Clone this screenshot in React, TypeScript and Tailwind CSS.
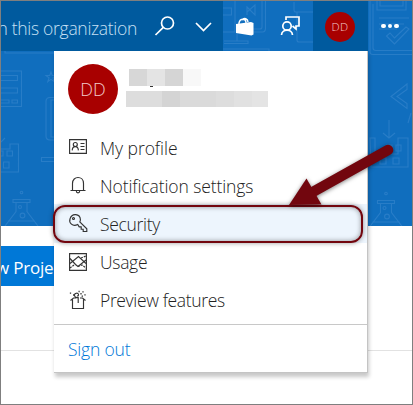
import React from 'react';

const font = "font-['Open_Sans','Noto_Sans',sans-serif]";

function Doodles() {
  return (
    <svg className="absolute inset-0" width="411" height="225" viewBox="1 1 411 225" fill="none" stroke="#3987ce" strokeWidth="1.1" opacity="0.6">
      <path d="M5 51v2h55v-2M1 71h20.500v35.500H1M1 75.500h16.500v5H1M1 88h16.500v5H1M1 100h8v3H1M12 100h5.500v3H12z" />
      <path d="M51 72l1.200 3.500h3.800l-3 2.400 1.200 3.700-3.200-2.200-3.200 2.200 1.200-3.700-3-2.400h3.800z" />
      <path d="M54 97.500h-4c-3 0-4 2-4 4V136c0 3 2 4 4 4h4M54 100h-3v37h3M1 142l4-4M1 149h9v-5h8.500v28H1M1 151h2v5H1M7 151h5.500v5H7zM3.500 162h5.500v6H3.500zM54 157.500H41.500v4H54" />
      <g id="flask"><circle cx="21.500" cy="192.500" r="1.300"/><path d="M13 199.500h17v3H13zM16 202.500v9L5 226M27 202.500v9L38 226M8 221h27" /><circle cx="20" cy="207" r="1.500"/><circle cx="22.500" cy="215.500" r="2.400"/></g>
      <use href="#flask" x="364.500" y="1" />
      <path d="M223 8h8.500v7H223M235 1v31h-12M265.500 1v27c0 2-1 4-3 4H238M262 1v26c0 1-1 2-2 2h-22M224 41h24v2.500h-24M237 32v9M223 49h46v2" />
      <path d="M247 7l8 8V5l-8 7v3zM247 7v8M294 2v8c0 1 1 2 2 2h17M297 12v28c0 1.500 1 2 2 2h14" />
      <path d="M370 1v51c0 2 1 2.500 3 2.500h39M373 4v44c0 2 1 2.500 3 2.500h36M377 1v9h29V1M380 1v5h23V1M379 18h30M379 24h25M379 29h18M386.500 36l8 8L409 29l-3-2-11.500 11-4.500-5z" />
      <path d="M407 84l-16 12.500 16 12v-5l-10-7 10-7zM389 120v11M411 113l-3 10M389 130v8M383 133l6 5 6-5M370 138h5v16h23v-16h10v29h-37zM387 145h5v6h-5zM396 145h5v6h-5zM380 158h6v6h-6zM393 158h6v6h-6z" />
    </svg>
  );
}

const icons: Record<string, React.ReactNode> = {
  'My profile': <><path d="M1.600 2.600h16.800v13.800H1.600z"/><circle cx="7.300" cy="7.500" r="2"/><path d="M4.200 13.400c.3-5 5.900-5 6.200 0M12.500 6.500h4M12.500 9.500h4M12.500 12.500h4"/></>,
  'Notification settings': <><path d="M2.500 15.500h2v-7c0-8 11-8 11 0v7h2h-15M8.300 16c0 2.500 3.400 2.500 3.400 0"/></>,
  Security: <><path d="M9.700 11.500C4.500 14 .7 9.800 2 5.900 4-.4 12 .7 12.400 6.500c0 1-.2 1.700-.6 2.500l7 6.800v2.700h-3.600v-2.300h-2v-2.300h-2z"/><circle cx="5.500" cy="5.500" r="1"/></>,
  Usage: <><path d="M1.600 1.600h16.800v16.800H1.600z"/><path d="M2 6.500l5.500 6 2.500 2 8-6.500M2 11.500L10.500 4.500 18 11.500"/><path d="M2 16l4-3M10 14.500l4-1.500 4 3M13 6l5-2" strokeDasharray="2 1"/></>,
  'Preview features': <><path d="M4.500 9.500v9h11v-9M2.500 10.500l3-2.500H8M12 8h2.500l3 2.500M10.200 13V7.500c-4 1-5-4-1.800-4.300 3-.2 2.500 3.300.6 2.700"/><path d="M2.500 2.500v1.300M5 5h1.200M13 3v1.400M15 1.200v1.400M17 4.200v1.400M13.600 6.200H15M10.500 1.500h1.200" strokeWidth="1.300"/></>,
};

function MenuItem({ label, tracking, active = false }: { label: string; tracking: string; active?: boolean }) {
  return (
    <li className={`flex h-[38.200px] items-center pl-3.5 ${active ? 'bg-[#edf5fd]' : ''}`}>
      <svg width="20" height="20" viewBox="0 0 20 20" fill="none" stroke="#333" strokeWidth="1.150" className="shrink-0">{icons[label]}</svg>
      <span className={`ml-3 mt-px whitespace-nowrap text-[17.500px] font-[350] leading-[24px] text-[#222] ${tracking}`}>{label}</span>
    </li>
  );
}

function ProfileMenu() {
  return (
    <div className="absolute left-[53px] top-[50px] flex h-[322px] w-[314px] flex-col border-r border-b border-[#c4c4c4] bg-white shadow-[1px_4px_4px_rgba(0,0,0,0.22)]">
      <div className="flex h-[77px] shrink-0 pl-3.5 pt-[13px]">
        <div className="flex size-[50px] shrink-0 items-center justify-center rounded-full bg-[#a80000] text-[18px] font-light leading-none text-[#f3caca]">DD</div>
        <div className="ml-2 pt-[5px]">
          <div className="relative ml-[3px] flex h-[17px]">
            <i className="w-[18px] bg-[#d7d7d7]"/><i className="w-[18px] bg-[#e4e4e4]"/><i className="w-[18px] bg-[#d5d5d5]"/><i className="w-[18px] bg-[#f8f8f8]"/>
            <i className="absolute left-[21px] top-[17px] h-px w-[3px] bg-[#333]"/>
          </div>
          <div className="mt-[5px] flex h-4">
            <i className="w-[36px] bg-[#dddddd]"/><i className="w-[18px] bg-[#d4d4d4]"/><i className="w-[36px] bg-[#dadada]"/><i className="w-[18px] bg-[#dddddd]"/><i className="w-[18px] bg-[#e1e1e1]"/><i className="w-[16px] bg-[#e4e4e4]"/>
          </div>
        </div>
      </div>
      <ul className="h-[197px] shrink-0 border-b border-[#c8c8c8]">
        <MenuItem label="My profile" tracking="tracking-[-0.050px]" />
        <MenuItem label="Notification settings" tracking="tracking-[-0.100px]" />
        <MenuItem label="Security" tracking="tracking-[-0.300px]" active />
        <MenuItem label="Usage" tracking="tracking-[-0.300px]" />
        <MenuItem label="Preview features" tracking="tracking-[-0.350px]" />
      </ul>
      <div className="flex flex-1 items-center pl-3.5 pt-px text-[17.500px] font-[350] leading-6 tracking-[-0.200px] text-[#0078d7]">Sign out</div>
    </div>
  );
}

function Header() {
  return (
    <header className="relative flex h-[50px] w-[411px]">
      <div className="flex w-[222px] shrink-0 items-center bg-[#005a9e]">
        <div className="flex h-7 w-[136px] shrink-0 items-center justify-end overflow-hidden whitespace-nowrap pt-1 text-[17.500px] font-[350] tracking-[-0.300px] text-[#c7e0f4]">in this organization</div>
        <svg className="ml-[17px]" width="22" height="22" viewBox="0 0 22 22" fill="none" stroke="white" strokeWidth="1.700"><circle cx="13.500" cy="8" r="6"/><path d="M9.300 12.300L1.500 20"/></svg>
        <svg className="ml-[18px] mt-px" width="20" height="12" viewBox="0 0 20 12" fill="none" stroke="white" strokeWidth="1.700"><path d="M2 2l7.500 7.500L17 2"/></svg>
      </div>
      <div className="flex w-[90px] shrink-0 items-center pl-3">
        <svg width="22" height="22" viewBox="235 15 22 22"><path d="M236 24l15-2 2.500 1v11.500l-2 1L236 33z" fill="white"/><path d="M239 24v-1c1-5 7-5 7 0M242 20c2-3 6-1 6 2" fill="none" stroke="white" strokeWidth="1.400"/></svg>
        <svg className="ml-[23px]" width="22" height="22" viewBox="280 15 22 22" fill="none" stroke="white" strokeWidth="1.700"><circle cx="287" cy="26" r="4.200"/><path d="M281.500 35c.4-6.500 10.600-6.500 11 0M286 20v-3h13v9h-3v3l-3.500-3"/></svg>
      </div>
      <div className="flex w-[55px] shrink-0 items-center justify-center bg-[#005a9e]">
        <div className="mr-px mt-px flex size-[30px] items-center justify-center rounded-full bg-[#a80000] text-[11.500px] font-light leading-none tracking-[0.300px] text-[#f3caca]">DD</div>
      </div>
      <div className="flex flex-1 items-center gap-0.5 pl-[13px]">
        <i className="size-[4.500px] rounded-full bg-white"/><i className="size-[4.500px] rounded-full bg-white"/><i className="size-[4.500px] rounded-full bg-white"/>
      </div>
    </header>
  );
}

export default function App() {
  return (
    <main className={`relative h-[405px] w-[413px] overflow-hidden border border-[#7f7f7f] bg-white ${font}`}>
      <section className="relative h-[225px] overflow-hidden bg-[#106ebe]"><Doodles /><Header /></section>
      <div className="mt-5 flex h-10 w-[100px] items-center overflow-hidden whitespace-nowrap bg-[#0078d7] text-[17px] text-white"><span className="-ml-[27px] pt-1 tracking-[-0.200px]">New Project</span></div>
      <div className="mt-16 h-px bg-[#e2e2e2]" />
      <ProfileMenu />
      <div className="absolute left-[52px] top-[204px] h-[38px] w-[310px] rounded-[12px] border-2 border-[#72060e] shadow-[0_0_5px_rgba(0,0,0,0.4),inset_0_0_5px_rgba(0,0,0,0.4)]" />
      <svg className="absolute left-0 top-0 drop-shadow-[0_1px_2px_rgba(0,0,0,0.5)]" width="411" height="240" viewBox="1 1 411 240"><path d="M388 150L311 193" stroke="#72060e" strokeWidth="10.500" strokeLinecap="round"/><path d="M289 205L306.500 178.500 321.500 204.500z" fill="#72060e"/></svg>
    </main>
  );
}
